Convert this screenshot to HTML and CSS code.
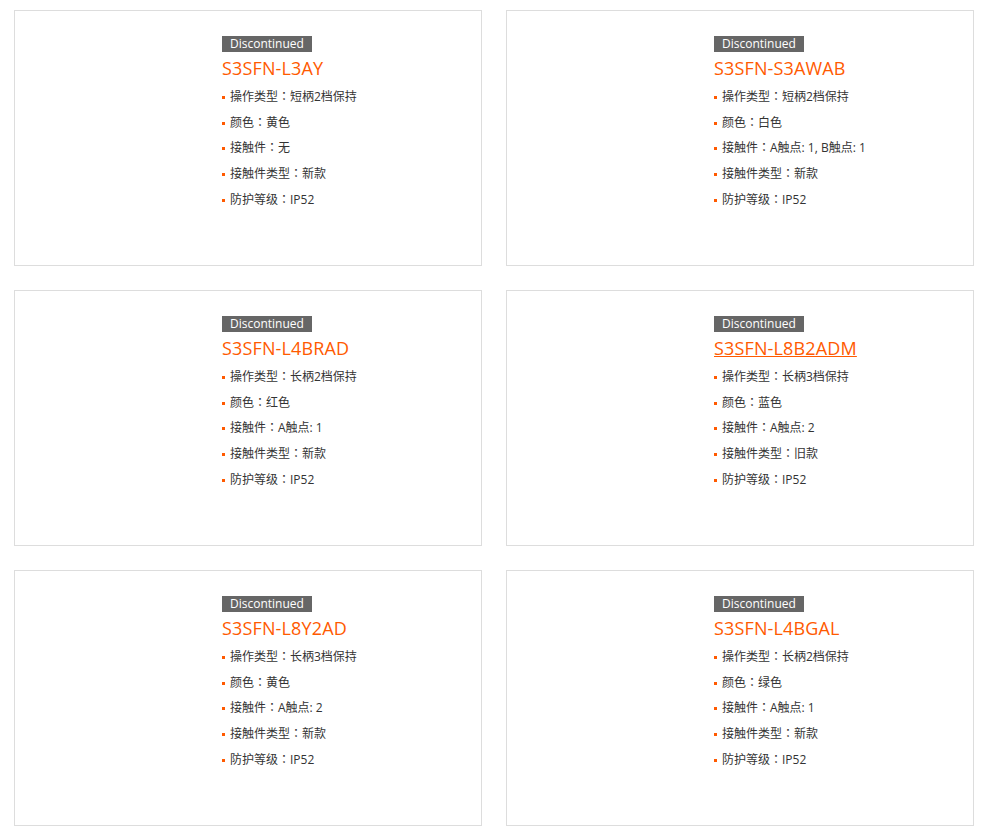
FILE: index.html
```html
<!DOCTYPE html>
<html lang="zh-CN">
<head>
  <meta charset="UTF-8" />
  <title>S3SFN 产品列表</title>
  <link rel="stylesheet" href="styles.css">
</head>
<body>
  <div class="product-list">
    <div class="card">
      <div class="card-img"></div>
      <div class="card-info">
        <span class="badge">Discontinued</span>
        <a class="model" href="#">S3SFN-L3AY</a>
        <ul class="specs">
          <li>操作类型：短柄2档保持</li>
          <li>颜色：黄色</li>
          <li>接触件：无</li>
          <li>接触件类型：新款</li>
          <li>防护等级：IP52</li>
        </ul>
      </div>
    </div>
    <div class="card">
      <div class="card-img"></div>
      <div class="card-info">
        <span class="badge">Discontinued</span>
        <a class="model" href="#">S3SFN-S3AWAB</a>
        <ul class="specs">
          <li>操作类型：短柄2档保持</li>
          <li>颜色：白色</li>
          <li>接触件：A触点: 1, B触点: 1</li>
          <li>接触件类型：新款</li>
          <li>防护等级：IP52</li>
        </ul>
      </div>
    </div>
    <div class="card">
      <div class="card-img"></div>
      <div class="card-info">
        <span class="badge">Discontinued</span>
        <a class="model" href="#">S3SFN-L4BRAD</a>
        <ul class="specs">
          <li>操作类型：长柄2档保持</li>
          <li>颜色：红色</li>
          <li>接触件：A触点: 1</li>
          <li>接触件类型：新款</li>
          <li>防护等级：IP52</li>
        </ul>
      </div>
    </div>
    <div class="card">
      <div class="card-img"></div>
      <div class="card-info">
        <span class="badge">Discontinued</span>
        <a class="model hover" href="#">S3SFN-L8B2ADM</a>
        <ul class="specs">
          <li>操作类型：长柄3档保持</li>
          <li>颜色：蓝色</li>
          <li>接触件：A触点: 2</li>
          <li>接触件类型：旧款</li>
          <li>防护等级：IP52</li>
        </ul>
      </div>
    </div>
    <div class="card">
      <div class="card-img"></div>
      <div class="card-info">
        <span class="badge">Discontinued</span>
        <a class="model" href="#">S3SFN-L8Y2AD</a>
        <ul class="specs">
          <li>操作类型：长柄3档保持</li>
          <li>颜色：黄色</li>
          <li>接触件：A触点: 2</li>
          <li>接触件类型：新款</li>
          <li>防护等级：IP52</li>
        </ul>
      </div>
    </div>
    <div class="card">
      <div class="card-img"></div>
      <div class="card-info">
        <span class="badge">Discontinued</span>
        <a class="model" href="#">S3SFN-L4BGAL</a>
        <ul class="specs">
          <li>操作类型：长柄2档保持</li>
          <li>颜色：绿色</li>
          <li>接触件：A触点: 1</li>
          <li>接触件类型：新款</li>
          <li>防护等级：IP52</li>
        </ul>
      </div>
    </div>
  </div>
</body>
</html>
```

FILE: styles.css
```css
body { margin: 0; background: #fff; font-family: "Open Sans", "Noto Sans CJK SC", sans-serif; color: #333; }
.product-list { display: grid; grid-template-columns: 468px 468px; gap: 24px; padding: 10px 0 0 14px; }
.card { display: flex; height: 256px; box-sizing: border-box; border: 1px solid #ddd; background: #fff; }
.card-img { width: 207px; flex: none; }
.card-info { padding-top: 25px; display: flex; flex-direction: column; align-items: flex-start; }
.badge { display: inline-block; background: #666; color: #fff; font-size: 12px; line-height: 16px; height: 16px; padding: 0 8px; }
.model { color: #ff5a00; font-size: 18px; line-height: 32px; letter-spacing: 0.15px; text-decoration: none; }
.model:hover, .model.hover { text-decoration: underline; }
.specs { list-style: none; margin: 0; padding: 0; font-family: "Open Sans", "Noto Sans CJK TC", sans-serif; font-feature-settings: "locl" 0; }
.specs li { position: relative; padding-left: 8px; font-size: 12px; line-height: 25.7px; }
.specs li::before { content: ""; position: absolute; left: 0; top: 12px; width: 3px; height: 3px; background: #ff5a00; }
```
